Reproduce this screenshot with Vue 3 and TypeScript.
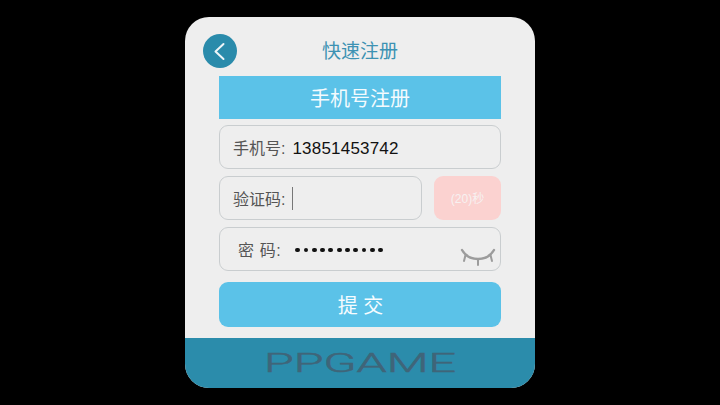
<script setup lang="ts">
const dotCount = 11
const dots = Array.from({ length: dotCount }, (_, i) => i)
</script>

<template>
  <div class="screen">
    <div class="card">
      <header class="top">
        <button class="back" type="button" aria-label="返回">
          <svg width="14" height="20" viewBox="0 0 14 20">
            <path d="M10.5 3 L2.5 10.5 L10.5 18" fill="none" stroke="#eef5f8" stroke-width="2" stroke-linecap="round" stroke-linejoin="round" />
          </svg>
        </button>
        <h1 class="title">快速注册</h1>
      </header>

      <div class="form">
        <div class="banner">手机号注册</div>

        <div class="field">
          <span class="label">手机号:</span>
          <span class="value">13851453742</span>
        </div>

        <div class="code-row">
          <div class="field code">
            <span class="label">验证码:</span>
            <span class="caret"></span>
          </div>
          <div class="timer">(20)秒</div>
        </div>

        <div class="field password">
          <span class="label pw-label">密 码:</span>
          <span class="dots">
            <i v-for="d in dots" :key="d" class="dot"></i>
          </span>
          <svg class="eye" width="36" height="20" viewBox="0 0 36 20">
            <path d="M2 3 C9 15 27 15 34 3" fill="none" stroke="#9c9c9c" stroke-width="2.4" stroke-linecap="round" />
            <path d="M5.5 8 L4 14 M18 12 L18 18 M30.5 8 L32 14" fill="none" stroke="#9c9c9c" stroke-width="2" stroke-linecap="round" />
          </svg>
        </div>

        <button class="submit" type="button">提 交</button>
      </div>

      <footer class="bottom">
        <svg class="logo" width="192" height="30" viewBox="0 0 192 30">
          <text x="0" y="24" textLength="192" lengthAdjust="spacingAndGlyphs">PPGAME</text>
        </svg>
      </footer>
    </div>
  </div>
</template>

<style>
html,
body {
  margin: 0;
  background: #000;
}
</style>

<style scoped>
.screen {
  width: 720px;
  height: 405px;
  background: #000;
  display: flex;
  align-items: center;
  justify-content: center;
  font-family: "Liberation Sans", "Noto Sans CJK SC", sans-serif;
}

.card {
  width: 350px;
  height: 371px;
  background: #eeeeee;
  border-radius: 24px;
  overflow: hidden;
  display: flex;
  flex-direction: column;
}

.top {
  height: 59px;
  box-sizing: border-box;
  padding: 17px 0 0 18px;
  display: flex;
  align-items: flex-start;
  position: relative;
}

.back {
  width: 34px;
  height: 34px;
  padding: 0;
  border: none;
  border-radius: 50%;
  background: #2a8bab;
  display: flex;
  align-items: center;
  justify-content: center;
}

.title {
  position: absolute;
  top: 18px;
  left: 0;
  right: 0;
  margin: 0;
  text-align: center;
  font-size: 19px;
  line-height: 34px;
  font-weight: 400;
  color: #3d92b3;
}

.form {
  flex: 1;
  padding: 0 34px;
  display: flex;
  flex-direction: column;
}

.banner {
  height: 43px;
  background: #5bc2e8;
  color: #f4fbfe;
  font-size: 20px;
  display: flex;
  align-items: center;
  justify-content: center;
  margin-bottom: 6px;
}

.field {
  height: 44px;
  box-sizing: border-box;
  border: 1px solid #c9cdcf;
  border-radius: 9px;
  padding-left: 13px;
  display: flex;
  align-items: center;
  position: relative;
}

.label {
  font-size: 16px;
  color: #555;
}

.value {
  font-size: 17px;
  letter-spacing: 0.2px;
  color: #111;
  margin-left: 7px;
  padding-top: 3px;
}

.code-row {
  display: flex;
  justify-content: space-between;
  margin: 7px 0;
}

.code {
  width: 203px;
}

.caret {
  width: 1px;
  height: 23px;
  background: #777;
  margin-left: 7px;
}

.timer {
  width: 67px;
  height: 44px;
  border-radius: 9px;
  background: #fbd2d0;
  color: #f7f1f0;
  font-size: 12px;
  padding-bottom: 2px;
  box-sizing: border-box;
  display: flex;
  align-items: center;
  justify-content: center;
}

.pw-label {
  margin-left: 5px;
  white-space: pre;
  letter-spacing: 0.6px;
}

.dots {
  display: flex;
  gap: 3.5px;
  margin-left: 14px;
  padding-top: 2px;
}

.dot {
  width: 4.8px;
  height: 4.8px;
  border-radius: 50%;
  background: #111;
}

.eye {
  position: absolute;
  right: 4px;
  bottom: 3px;
}

.submit {
  height: 45px;
  margin-top: 11px;
  padding: 0 0 0 1px;
  border: none;
  border-radius: 9px;
  background: #5bc2e8;
  color: #f6fcff;
  font-family: inherit;
  font-size: 20px;
}

.bottom {
  height: 50px;
  background: #2b8cab;
  display: flex;
  align-items: center;
  justify-content: center;
}

.logo text {
  font-family: Roboto, "Liberation Sans", sans-serif;
  font-size: 25px;
  font-weight: 300;
  fill: #3f6579;
  stroke: #3f6579;
  stroke-width: 0.5px;
}
</style>
